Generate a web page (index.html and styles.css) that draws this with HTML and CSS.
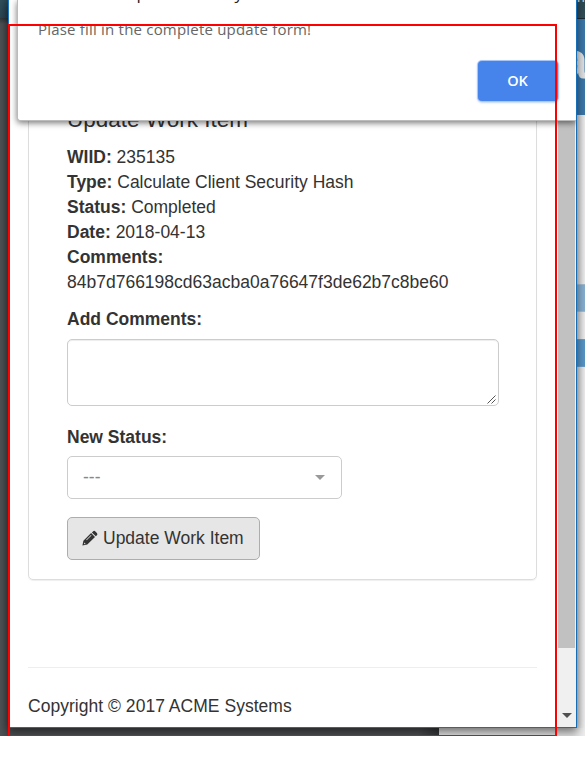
FILE: index.html
```
<!DOCTYPE html>
<html lang="en">
<head>
<meta charset="utf-8">
<title>ACME System 1 - Update Work Item</title>
<link rel="stylesheet" href="styles.css">
</head>
<body>
<div class="desktop">
  <div class="back-left"></div>
  <div class="back-right">
    <div class="back-nav"><span>n</span></div>
    <div class="back-banner"><span>a</span></div>
    <div class="back-page"><i class="row-light"></i><i class="row-dark"></i></div>
  </div>
  <div class="back-foot"></div>
  <main class="window">
    <div class="page">
      <section class="panel">
        <h1>Update Work Item</h1>
        <p><b>WIID:</b> 235135</p>
        <p><b>Type:</b> Calculate Client Security Hash</p>
        <p><b>Status:</b> Completed</p>
        <p><b>Date:</b> 2018-04-13</p>
        <p><b>Comments:</b></p>
        <p>84b7d766198cd63acba0a76647f3de62b7c8be60</p>
        <label class="add" for="comments">Add Comments:</label>
        <div class="area"><textarea id="comments"></textarea>
          <svg class="grip" viewBox="0 0 9 9"><path d="M.5 8.5l8-8M4.5 8.5l4-4"/></svg>
        </div>
        <label class="status">New Status:</label>
        <div class="select"><span>---</span><i class="caret"></i></div>
        <button class="update"><svg class="pencil" viewBox="0 0 16 16"><path fill-rule="evenodd" d="M11 1.4Q12.2.2 13.4 1.4L14.9 2.9Q16 4.1 14.9 5.2L13.8 6.2 9.9 2.4ZM9.1 3.1L13 7 5.3 14.6.4 15.6 1.4 10.8ZM9 5L4.2 9.8 4.7 10.3 9.5 5.5ZM2.3 12.4L2 13.6 2.6 14.2 3.7 13.9Z"/></svg>Update Work Item</button>
      </section>
      <footer>Copyright © 2017 ACME Systems</footer>
    </div>
    <div class="scrollbar"><div class="thumb"></div><i class="down"></i></div>
    <div class="dialog">
      <h2>acme-test.uipath.com says</h2>
      <p>Plase fill in the complete update form!</p>
      <button>OK</button>
    </div>
  </main>
  <div class="highlight"></div>
</div>
</body>
</html>
```
FILE: styles.css
```
* { box-sizing: border-box; }
body { margin: 0; background: #fff; font-family: "Liberation Sans", Arial, sans-serif; font-size: 17.5px; line-height: 25px; color: #333; }
h1, h2, p { margin: 0; font-weight: 400; }
.desktop { position: relative; display: grid; grid-template: 728px 8px / 8px 569px 8px; width: 585px; height: 736px; overflow: hidden; background: #4b4f51; }
.back-left { grid-area: 1 / 1 / 3 / 2; background: linear-gradient(90deg, #0000, #0002), linear-gradient(#2f505d 0, #2b4753 18px, #30373b 18px, #4e5255 24px); }
.back-right { grid-area: 1 / 3 / 3 / 4; display: flex; flex-direction: column; min-width: 0; overflow: hidden; }
.back-nav { height: 19px; overflow: hidden; background: linear-gradient(#2c4650, #344f5a); border-bottom: 1px solid #1b2b34; color: #ccc; font-size: 14px; line-height: 16px; }
.back-nav span { display: block; margin-top: -11px; }
.back-banner { height: 96px; overflow: hidden; background: #3b78aa; color: #dfe1e3; font: bold 52px/78px "Liberation Sans", sans-serif; }
.back-banner span { display: block; margin: 2px 0 0 -18px; }
.back-page { flex: 1; padding-top: 169px; background: linear-gradient(90deg, #d3d3d3, #eee); }
.back-page i { display: block; height: 28px; border: solid #a5bdd0; border-width: 1px 0; }
.row-light { background: #87afd0; }
.back-page .row-dark { margin-top: 27px; background: #5795c6; border-color: #6c9fc9; }
.back-foot { grid-area: 2 / 2 / 3 / 4; background: linear-gradient(90deg, #494c4e 410px, #323435 431px, #dcdcdc 431px, #dcdcdc 565px, #eee 577px); }
.window { grid-area: 1 / 2 / 2 / 3; display: grid; grid-template-columns: 1fr 18px; position: relative; overflow: hidden; background: #fff; border: solid #176eb5; border-width: 0 1px 1px; border-left-color: #1976c2; box-shadow: 0 3px 9px #0008; }
.page { padding: 100px 21px 0 19px; margin-right: -1px; }
.panel { height: 480px; border: 1px solid #ddd; border-radius: 5px; box-shadow: 0 1px 1px #0001; padding: 6px 37px 0 38px; }
.panel, footer { width: 509px; }
h1 { font-size: 22.5px; line-height: 25px; margin-bottom: 13px; }
label { display: block; font-weight: 700; }
.add { margin-top: 12px; }
.area { position: relative; height: 67px; margin-top: 7px; }
textarea { display: block; width: 432px; height: 67px; border: 1px solid #ccc; border-radius: 5px; resize: none; box-shadow: inset 0 1px 1px #00000013; }
.grip { position: absolute; width: 9px; height: 9px; right: 3px; bottom: 2px; fill: none; stroke: #555; }
.status { margin-top: 19px; }
.select { display: flex; justify-content: space-between; align-items: center; width: 275px; height: 43px; margin-top: 6px; padding: 0 16px 0 15px; border: 1px solid #ccc; border-radius: 5px; color: #888; }
.caret { border: 5px solid transparent; border-top-color: #999; border-bottom: 0; }
.update { display: flex; align-items: center; width: 193px; height: 43px; margin-top: 18px; padding: 0 0 0 15px; border: 1px solid #adadad; border-radius: 5px; background: #e6e6e6; color: #333; font: inherit; white-space: nowrap; }
.pencil { width: 16px; height: 16px; margin: -1px 5px 0 -1px; fill: #333; }
footer { margin-top: 87px; padding-top: 26px; border-top: 1px solid #eee; letter-spacing: .03px; }
.scrollbar { display: flex; flex-direction: column; justify-content: space-between; align-items: flex-start; padding-bottom: 9px; background: #f0f0f0; }
.thumb { width: 17px; height: 648px; background: #c1c1c1; }
.down { margin-left: 4px; border: 5px solid transparent; border-top-color: #505050; border-bottom: 0; }
.dialog { position: absolute; left: 8px; right: 0; top: 0; height: 121px; background: #fff; border: solid #bbb; border-width: 0 0 1px 1px; border-radius: 0 0 0 3px; box-shadow: 0 2px 6px #0008; font-family: "Open Sans", "Noto Sans", sans-serif; }
.dialog h2 { margin: -19px 0 0 20px; font-size: 17px; line-height: 24px; letter-spacing: .1px; color: #222; }
.dialog p { margin: 12px 0 0 20px; font-size: 15px; line-height: 24px; letter-spacing: .2px; color: #666; white-space: nowrap; }
.dialog button { display: block; margin: 20px 18px 0 auto; width: 80px; height: 40px; padding: 0 1px 2px 0; border: 0; border-radius: 4px; background: #4683ea; color: #fff; font: 600 14.5px "Open Sans", sans-serif; box-shadow: 0 0 0 1px #a9c6f7, 0 1px 2px 1px #4683ea55; }
.highlight { position: absolute; left: 8px; top: 24px; width: 549px; height: 713px; border: 2px solid red; }
```
